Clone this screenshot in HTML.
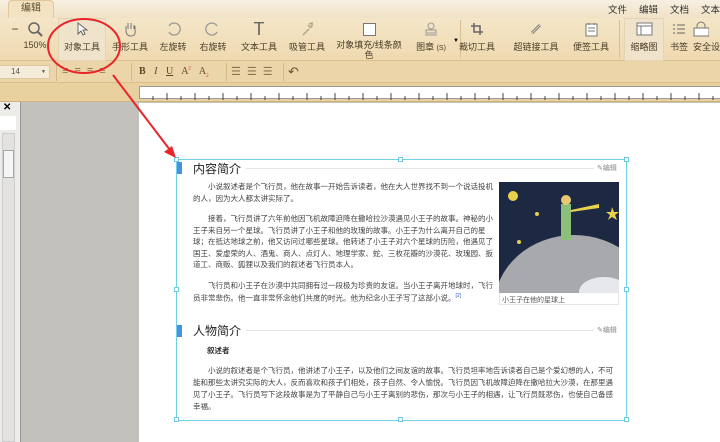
<!DOCTYPE html>
<html><head><meta charset="utf-8"><style>
*{margin:0;padding:0;box-sizing:border-box}
body{width:720px;height:442px;overflow:hidden;position:relative;font-family:"Liberation Sans","Noto Sans CJK SC",sans-serif;background:#c3c1bc}
.abs{position:absolute}
#tabbar{left:0;top:0;width:720px;height:18px;background:linear-gradient(#f7efe0,#f0e2c6)}
#tab{left:8px;top:0;width:46px;height:18px;background:#f3e3c3;border:1px solid #e0c89a;border-bottom:none;border-radius:4px 4px 0 0;font-size:10px;color:#5a4a30;text-align:center;line-height:16px}
#menu{right:0;top:2px;font-size:9.5px;color:#333}
#menu span{margin-right:12px}
#tool{left:0;top:18px;width:720px;height:43px;background:linear-gradient(#f4e6c8,#efd9b0);border-bottom:1px solid #dcc18e}
.tb{position:absolute;top:0;text-align:center;font-size:9px;color:#4a3c28;width:50px}
.tb .ic{height:22px;display:flex;align-items:center;justify-content:center}
#fmt{left:0;top:61px;width:720px;height:22px;background:#ecd5a8;border-bottom:1px solid #d9bf8c}
#rb{left:0;top:83px;width:720px;height:19px;background:#e9d09f;border-bottom:1px solid #cdb482}
#ruler{left:139px;top:86px;width:581px;height:13px;background:#fff;border:1px solid #999;border-right:none}
#page{left:139px;top:103px;width:581px;height:339px;background:#fff}
.sel{position:absolute;border:1px solid #6fd3e8}
.h{position:absolute;width:5px;height:5px;border:1px solid #6fc9e0;background:#fff}
.t{font-size:7.5px;color:#444;line-height:11.5px}
</style></head><body>
<div id="tabbar" class="abs"></div>
<div id="tab" class="abs">编辑</div>
<div id="menu" class="abs"><span>文件</span><span>编辑</span><span>文档</span><span style="margin-right:0">文本</span></div>
<div id="tool" class="abs">
 <div class="tb" style="left:10px;width:10px;top:4px;font-size:12px">−</div>
 <div class="tb" style="left:10px"><div class="ic"><svg width="16" height="16"><circle cx="7" cy="7" r="5" fill="none" stroke="#666" stroke-width="1.5"/><path d="M11 11l4 4" stroke="#666" stroke-width="2"/></svg></div>150%</div>
 <div class="abs" style="left:58px;top:0;width:48px;height:43px;background:#efe3cc;border:1px solid #e5d4b2"></div>
 <div class="tb" style="left:57px"><div class="ic"><svg width="14" height="16"><path d="M3 2v11l3-3 2 4 2-1-2-4h4z" fill="#fff" stroke="#666"/></svg></div>对象工具</div>
 <div class="tb" style="left:105px"><div class="ic"><svg width="14" height="16"><path d="M3 9V5M5 8V2M8 8V2M11 8V4M3 9q0 6 5 6t4-6V5" fill="none" stroke="#777"/></svg></div>手形工具</div>
 <div class="tb" style="left:148px"><div class="ic"><svg width="16" height="16"><path d="M4 5a6 6 0 1 1 0 6" fill="none" stroke="#999" stroke-width="1.3"/></svg></div>左旋转</div>
 <div class="tb" style="left:188px"><div class="ic"><svg width="16" height="16"><path d="M12 5a6 6 0 1 0 0 6" fill="none" stroke="#999" stroke-width="1.3"/></svg></div>右旋转</div>
 <div class="tb" style="left:234px"><div class="ic" style="font-size:18px;color:#666">T</div>文本工具</div>
 <div class="tb" style="left:282px"><div class="ic"><svg width="14" height="16"><path d="M3 14l6-6M8 4l3 3M9 3l3-1 0 3-2 2" fill="none" stroke="#aa8" stroke-width="1.5"/></svg></div>吸管工具</div>
 <div class="tb" style="left:332px;width:74px;line-height:10px"><div class="ic"><div style="width:13px;height:13px;background:#fff;border:1px solid #777"></div></div>对象填充/线条颜<br>色</div>
 <div class="tb" style="left:406px"><div class="ic"><svg width="16" height="16"><circle cx="8" cy="5" r="3" fill="none" stroke="#999"/><rect x="3" y="9" width="10" height="3" fill="none" stroke="#999"/><path d="M2 14h12" stroke="#999"/></svg></div>图章 <span style="font-size:7px">(S)</span></div>
 <div class="abs" style="left:453px;top:20px;font-size:6px">▼</div>
 <div class="abs" style="left:460px;top:2px;width:1px;height:38px;background:#d8c094"></div>
 <div class="tb" style="left:452px"><div class="ic"><svg width="14" height="14"><path d="M4 1v9h9M1 4h9v9" fill="none" stroke="#666" stroke-width="1.5"/></svg></div>裁切工具</div>
 <div class="tb" style="left:506px;width:60px"><div class="ic"><svg width="14" height="14"><path d="M3 11l8-8" stroke="#777" stroke-width="3"/><path d="M3 11l8-8" stroke="#f1deb7" stroke-width="1"/></svg></div>超链接工具</div>
 <div class="tb" style="left:566px"><div class="ic"><svg width="13" height="15"><rect x="1" y="2" width="11" height="12" fill="#fff" stroke="#777"/><path d="M3 6h7M3 9h7M4 1v2M9 1v2" stroke="#777"/></svg></div>便签工具</div>
 <div class="abs" style="left:619px;top:2px;width:1px;height:38px;background:#d8c094"></div>
 <div class="abs" style="left:624px;top:0;width:40px;height:43px;background:#efe3cc;border:1px solid #e5d4b2"></div>
 <div class="tb" style="left:619px"><div class="ic"><svg width="17" height="14"><rect x="1" y="1" width="15" height="12" fill="#fff" stroke="#777"/><path d="M1 4h15M5 4v9" stroke="#777"/></svg></div>缩略图</div>
 <div class="tb" style="left:654px"><div class="ic"><svg width="14" height="12"><path d="M1 2h2M5 2h8M1 6h2M5 6h8M1 10h2M5 10h8" stroke="#666"/></svg></div>书签</div>
 <div class="tb" style="left:693px;width:40px;text-align:left"><div class="ic" style="justify-content:flex-start"><svg width="16" height="16"><path d="M4 7V5a4 4 0 0 1 8 0v2" fill="none" stroke="#777"/><rect x="1" y="7" width="15" height="8" fill="#fff" stroke="#777"/></svg></div>安全设</div>
</div>
<div id="fmt" class="abs">
 <div class="abs" style="left:-2px;top:4px;width:52px;height:14px;background:#f5ecda;border:1px solid #dcc7a0;font-size:8px;color:#555;padding-left:12px;line-height:12px">14<span style="position:absolute;right:3px;font-size:5px">▼</span></div>
 <div class="abs" style="left:56px;top:2px;width:1px;height:18px;background:#d3b98a"></div>
 <div class="abs" style="left:62px;top:4px;font-size:11px;color:#8a7550;letter-spacing:6px">≡≡≡≡</div>
 <div class="abs" style="left:131px;top:2px;width:1px;height:18px;background:#d3b98a"></div>
 <div class="abs" style="left:139px;top:5px;font-size:10px;color:#5a4a30;font-family:'Liberation Serif',serif;word-spacing:6px"><b>B</b> <i>I</i> <u>U</u> A<sup style="font-size:5px;color:#c33">2</sup> A<sub style="font-size:5px;color:#c33">2</sub></div>
 <div class="abs" style="left:226px;top:2px;width:1px;height:18px;background:#d3b98a"></div>
 <div class="abs" style="left:231px;top:4px;font-size:11px;color:#8a7550;letter-spacing:6px">☰☰☰</div>
 <div class="abs" style="left:283px;top:2px;width:1px;height:18px;background:#d3b98a"></div>
 <div class="abs" style="left:288px;top:3px;font-size:13px;color:#6a5030">↶</div>
</div>
<div id="rb" class="abs"></div>
<div id="ruler" class="abs"><svg width="581" height="11">
<g stroke="#444" stroke-width="1">
<path d="M13 11v-4M27 11v-7M41 11v-4M55 11v-7M69 11v-4M83 11v-7M97 11v-4M111 11v-7M125 11v-4M139 11v-7M153 11v-4M167 11v-7M181 11v-4M195 11v-7M209 11v-4M223 11v-7M237 11v-4M251 11v-7M265 11v-4M279 11v-7M293 11v-4M307 11v-7M321 11v-4M335 11v-7M349 11v-4M363 11v-7M377 11v-4M391 11v-7M405 11v-4M419 11v-7M433 11v-4M447 11v-7M461 11v-4M475 11v-7M489 11v-4M503 11v-7M517 11v-4M531 11v-7M545 11v-4M559 11v-7M573 11v-4"/></g></svg></div>
<div class="abs" style="left:0;top:102px;width:20px;height:340px;background:#eeece8"></div>
<div class="abs" style="left:3px;top:102px;font-size:10px;font-weight:bold">✕</div>
<div class="abs" style="left:0;top:116px;width:16px;height:14px;background:#fff"></div>
<div class="abs" style="left:2px;top:133px;width:13px;height:309px;background:#e4e2de;border:1px solid #ccc"></div>
<div class="abs" style="left:3px;top:150px;width:11px;height:28px;background:#f4f4f4;border:1px solid #aaa"></div>
<div class="abs" style="left:20px;top:102px;width:1px;height:340px;background:#999"></div>
<div id="page" class="abs"></div>
<div class="sel" style="left:176px;top:159px;width:451px;height:262px"></div>
<div class="h" style="left:174px;top:157px"></div><div class="h" style="left:398px;top:157px"></div><div class="h" style="left:624px;top:157px"></div>
<div class="h" style="left:174px;top:287px"></div><div class="h" style="left:624px;top:287px"></div>
<div class="h" style="left:174px;top:417px"></div><div class="h" style="left:398px;top:417px"></div><div class="h" style="left:624px;top:417px"></div>
<div class="abs" style="left:177px;top:162px;width:5px;height:12px;background:#4a90e2"></div>
<div class="abs" style="left:193px;top:160px;font-size:12px;color:#222">内容简介</div>
<div class="abs" style="left:246px;top:168px;width:348px;height:1px;background:#e5e5e5"></div>
<div class="abs" style="left:597px;top:163px;font-size:7px;color:#888">✎编辑</div>
<div class="abs t" style="left:193px;top:181px;width:303px">
<p style="text-indent:15px">小说叙述者是个飞行员，他在故事一开始告诉读者，他在大人世界找不到一个说话投机的人，因为大人都太讲实际了。</p>
<p style="text-indent:15px;margin-top:9px">接着，飞行员讲了六年前他因飞机故障迫降在撒哈拉沙漠遇见小王子的故事。神秘的小王子来自另一个星球。飞行员讲了小王子和他的玫瑰的故事。小王子为什么离开自己的星球；在抵达地球之前，他又访问过哪些星球。他转述了小王子对六个星球的历险，他遇见了国王、爱虚荣的人、酒鬼、商人、点灯人、地理学家、蛇、三枚花瓣的沙漠花、玫瑰园、扳道工、商贩、狐狸以及我们的叙述者飞行员本人。</p>
<p style="text-indent:15px;margin-top:9px">飞行员和小王子在沙漠中共同拥有过一段极为珍贵的友谊。当小王子离开地球时，飞行员非常悲伤。他一直非常怀念他们共度的时光。他为纪念小王子写了这部小说。<sup style="color:#36c;font-size:5px">[2]</sup></p>
</div>
<div class="abs" style="left:499px;top:182px;width:120px;height:123px;border:1px solid #e5e5e5"></div>
<svg class="abs" style="left:499px;top:182px" width="120" height="111">
<rect width="120" height="111" fill="#1d2843"/>
<circle cx="14" cy="14" r="5" fill="#e8d24a"/><circle cx="38" cy="32" r="2" fill="#e8d24a"/><circle cx="20" cy="60" r="2" fill="#e8d24a"/><path d="M113 25l2 5 5 0-4 3 2 5-5-3-4 3 2-5-4-3 5 0z" fill="#e8d24a"/>
<ellipse cx="75" cy="125" rx="80" ry="72" fill="#a8a9ad"/><ellipse cx="105" cy="110" rx="25" ry="15" fill="#e6e8ec"/>
<rect x="62" y="22" width="10" height="36" fill="#8bbf7a"/><circle cx="67" cy="18" r="5" fill="#e8c870"/><path d="M72 28l28-6 0 4-28 4z" fill="#e8d24a"/>
</svg>
<div class="abs" style="left:502px;top:295px;font-size:7px;color:#555">小王子在他的星球上</div>
<div class="abs" style="left:177px;top:325px;width:5px;height:12px;background:#4a90e2"></div>
<div class="abs" style="left:193px;top:322px;font-size:12px;color:#222">人物简介</div>
<div class="abs" style="left:246px;top:330px;width:348px;height:1px;background:#e5e5e5"></div>
<div class="abs" style="left:597px;top:325px;font-size:7px;color:#888">✎编辑</div>
<div class="abs" style="left:207px;top:345px;font-size:7.5px;font-weight:bold;color:#333">叙述者</div>
<div class="abs t" style="left:193px;top:365px;width:425px;line-height:12px">
<p style="text-indent:15px">小说的叙述者是个飞行员，他讲述了小王子，以及他们之间友谊的故事。飞行员坦率地告诉读者自己是个爱幻想的人，不可能和那些太讲究实际的大人，反而喜欢和孩子们相处，孩子自然、令人愉悦。飞行员因飞机故障迫降在撒哈拉大沙漠，在那里遇见了小王子。飞行员写下这段故事是为了平静自己与小王子离别的悲伤，那次与小王子的相遇，让飞行员既悲伤，也使自己备感幸福。</p>
</div>
<svg class="abs" style="left:0;top:0" width="720" height="442">
<ellipse cx="84" cy="46" rx="36" ry="27" fill="none" stroke="#e8252a" stroke-width="2"/>
<path d="M113 75L170 150" stroke="#e8252a" stroke-width="2"/>
<path d="M176 158l-12-6 8-6z" fill="#e8252a"/>
</svg>
</body></html>
